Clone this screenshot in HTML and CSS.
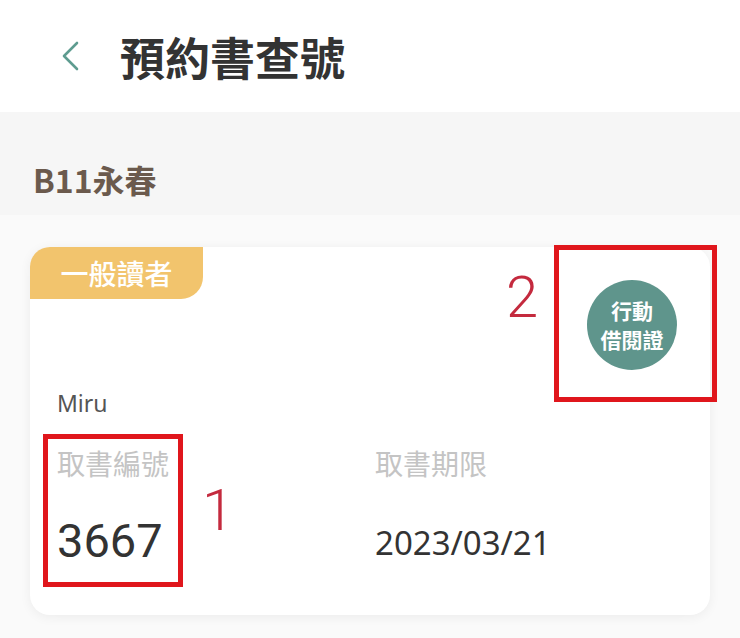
FILE: index.html
```html
<!DOCTYPE html>
<html>
<head>
    <meta charset="UTF-8">
    <title>預約書查號</title>
    <link rel="stylesheet" href="styles.css">
</head>
<body>
    <div class="header">
        <svg class="back" width="22" height="30" viewBox="0 0 22 30">
            <path d="M18 2 L5 15 L18 28" fill="none" stroke="#5e9c90" stroke-width="2.6" stroke-linecap="round" stroke-linejoin="round"/>
        </svg>
        <h1 class="title">預約書查號</h1>
    </div>

    <div class="branch">B11永春</div>

    <div class="content">
        <div class="card">
            <div class="card-top">
                <div class="tag">一般讀者</div>
                <div class="mobile-card">行動<br>借閱證</div>
            </div>
            <div class="name">Miru</div>
            <div class="fields">
                <div class="field">
                    <div class="label">取書編號</div>
                    <div class="value big">3667</div>
                </div>
                <div class="field">
                    <div class="label">取書期限</div>
                    <div class="value">2023/03/21</div>
                </div>
            </div>

            <div class="mark mark-1"></div>
            <div class="mark mark-2"></div>
            <span class="mark-num num-1">1</span>
            <span class="mark-num num-2">2</span>
        </div>
    </div>
</body>
</html>
```

FILE: styles.css
```css
body {
  margin: 0;
  background-color: #fafafa;
  font-family: "Noto Sans CJK TC", "Noto Sans", sans-serif;
  color: #333;
}

.header {
  display: flex;
  align-items: center;
  height: 112px;
  padding-left: 59px;
  background-color: #fff;
}

.back {
  display: block;
}

.title {
  margin: 0 0 0 39px;
  font-size: 45px;
  font-weight: bold;
  color: #333;
  line-height: 1;
}

.branch {
  height: 103px;
  box-sizing: border-box;
  padding: 47px 0 0 33px;
  background-color: #f6f6f6;
  font-size: 32px;
  font-weight: bold;
  color: #6b5a4d;
  line-height: 40px;
}

.content {
  padding: 32px 30px 20px 30px;
}

.card {
  position: relative;
  height: 368px;
  background-color: #fff;
  border-radius: 20px;
  box-shadow: 0 2px 12px rgba(0, 0, 0, 0.06);
}

.card-top {
  display: flex;
  justify-content: space-between;
  align-items: flex-start;
}

.tag {
  width: 173px;
  height: 52px;
  display: flex;
  align-items: center;
  justify-content: center;
  background-color: #f2c46d;
  border-radius: 20px 0 22px 0;
  color: #fff;
  font-size: 28px;
  font-weight: 500;
}

.mobile-card {
  width: 90px;
  height: 90px;
  margin: 33px 33px 0 0;
  border-radius: 50%;
  background-color: #5f958c;
  color: #fff;
  font-size: 21px;
  font-weight: bold;
  line-height: 29px;
  display: flex;
  align-items: center;
  justify-content: center;
  text-align: center;
}

.name {
  margin: 18px 0 0 27px;
  font-size: 23px;
  line-height: 30px;
  color: #555;
  font-family: "Noto Sans", sans-serif;
}

.fields {
  display: grid;
  grid-template-columns: 318px 1fr;
  margin: 25px 0 0 27px;
}

.label {
  font-size: 28px;
  line-height: 40px;
  color: #c4c4c4;
}

.value {
  margin-top: 38px;
  font-family: "Noto Sans", sans-serif;
  font-size: 33px;
  line-height: 44px;
  color: #333;
}

.value.big {
  margin-top: 30px;
  font-family: "Roboto", sans-serif;
  font-size: 47px;
  line-height: 56px;
}

.mark {
  position: absolute;
  border: 5px solid #e0161c;
  box-sizing: border-box;
}

.mark-1 {
  left: 13px;
  top: 187px;
  width: 140px;
  height: 153px;
}

.mark-2 {
  left: 524px;
  top: -2px;
  width: 163px;
  height: 157px;
}

.mark-num {
  position: absolute;
  font-family: "Roboto", sans-serif;
  font-weight: 300;
  font-size: 58px;
  line-height: 58px;
  color: #c42a3e;
}

.num-1 {
  left: 172px;
  top: 234px;
}

.num-2 {
  left: 476px;
  top: 21px;
}
```
